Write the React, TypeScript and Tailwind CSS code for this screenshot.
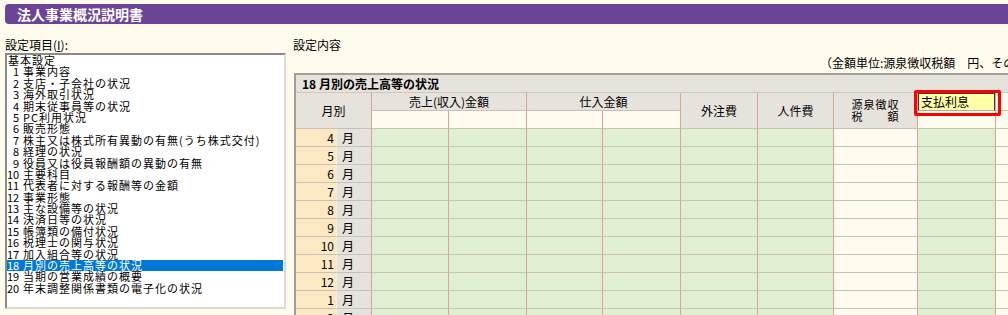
const items = [
  { no: "", label: "基本設定" },
  { no: "1", label: "事業内容" },
  { no: "2", label: "支店・子会社の状況" },
  { no: "3", label: "海外取引状況" },
  { no: "4", label: "期末従事員等の状況" },
  { no: "5", label: "PC利用状況" },
  { no: "6", label: "販売形態" },
  { no: "7", label: "株主又は株式所有異動の有無(うち株式交付)" },
  { no: "8", label: "経理の状況" },
  { no: "9", label: "役員又は役員報酬額の異動の有無" },
  { no: "10", label: "主要科目" },
  { no: "11", label: "代表者に対する報酬等の金額" },
  { no: "12", label: "事業形態" },
  { no: "13", label: "主な設備等の状況" },
  { no: "14", label: "決済日等の状況" },
  { no: "15", label: "帳簿類の備付状況" },
  { no: "16", label: "税理士の関与状況" },
  { no: "17", label: "加入組合等の状況" },
  { no: "18", label: "月別の売上高等の状況" },
  { no: "19", label: "当期の営業成績の概要" },
  { no: "20", label: "年末調整関係書類の電子化の状況" },
];

const months = [4, 5, 6, 7, 8, 9, 10, 11, 12, 1, 2, 3];

// background of each data column
const cellBg = [
  "bg-[#fde8c4]",
  "bg-[#e6e2dc]",
  "bg-[#dfefd0]",
  "bg-[#dfefd0]",
  "bg-[#dfefd0]",
  "bg-[#dfefd0]",
  "bg-[#dfefd0]",
  "bg-[#dfefd0]",
  "bg-[#fffbee]",
  "bg-[#dfefd0]",
  "bg-[#fffbee]",
];

const SettingList = () => {
  return (
    <ul className="h-[256px] w-[281px] overflow-hidden border-2 border-t-[#8a8a8a] border-l-[#8a8a8a] border-r-[#dedad2] border-b-[#dedad2] bg-white pr-[1px] text-[11px]">
      {items.map((item) => {
        const selected = item.no === "18";
        return (
          <li
            key={item.label}
            className={`flex h-[11.4px] items-center whitespace-nowrap leading-[11.4px] ${
              selected ? "bg-[#0078d7] text-white" : "text-black"
            }`}
          >
            {item.no === "" ? (
              <span className="pl-[1px] tracking-[1px]">{item.label}</span>
            ) : (
              <>
                <span className="w-[12px] text-right">{item.no}</span>
                <span className="ml-[4px] tracking-[1px]">{item.label}</span>
              </>
            )}
          </li>
        );
      })}
    </ul>
  );
};

const MonthTable = () => {
  const head = "flex items-center justify-center bg-[#e6e2dc] border-r border-b border-r-[#daa394] border-b-[#c9c1b7]";
  const sub = "bg-[#fffbee] border-r border-b border-r-[#daa394] border-b-[#c9c1b7]";
  return (
    <div className="ml-[1px] border-t-2 border-l-2 border-[#a29e9a] bg-[#e6e2dc]">
      <div className="flex h-[18px] items-center border-b border-[#d0c8c0] pl-[6px] text-[12px] leading-[16px] font-bold">
        18 月別の売上高等の状況
      </div>
      <div className="relative grid auto-rows-[18px] grid-cols-[41px_35px_77px_78px_76px_78px_77px_76px_84px_78px_1fr] text-[12px] leading-[14px]">
        <div className={`col-span-2 row-span-2 ${head}`}>月別</div>
        <div className={`col-span-2 ${head}`}>売上(収入)金額</div>
        <div className={`col-span-2 ${head}`}>仕入金額</div>
        <div className={`row-span-2 ${head}`}>外注費</div>
        <div className={`row-span-2 ${head}`}>人件費</div>
        <div className={`row-span-2 flex-col text-[11px] leading-[11.5px] tracking-[1px] ${head}`}>
          <span>源泉徴収</span>
          <span>税　　額</span>
        </div>
        <div className="border-r border-r-[#daa394] bg-[#e6e2dc]">
          <div className="flex h-[18px] items-center border border-[#3c3c3c] border-b-[#b0aca6] border-b-dashed bg-[#ffffa8] pl-[2px]">
            支払利息
          </div>
        </div>
        <div className="border-b border-b-[#c9c1b7] bg-[#fffbee]" />
        <div className={sub} />
        <div className={sub} />
        <div className={sub} />
        <div className={sub} />
        <div className={sub} />
        <div className="border-b border-b-[#c9c1b7] bg-[#fffbee]" />

        {months.map((m) =>
          cellBg.map((bg, i) => (
            <div
              key={`${m}-${i}`}
              className={`border-b border-b-[#c9c1b7] ${bg} ${
                i === 0
                  ? "border-r border-r-[#f3ece2] pr-[2px] text-right leading-[17px]"
                  : i === 10
                  ? ""
                  : "border-r border-r-[#daa394]"
              } ${i === 1 ? "pl-[5px] leading-[17px]" : ""}`}
            >
              {i === 0 ? m : i === 1 ? "月" : ""}
            </div>
          ))
        )}

        <div className="absolute top-[-3px] left-[618px] h-[26px] w-[87px] rounded-[2px] border-[3px] border-[#ff0000]" />
      </div>
    </div>
  );
};

const App = () => {
  return (
    <div className="h-[315px] w-[1008px] overflow-hidden bg-[#fffbec] font-['Noto_Sans_CJK_JP',sans-serif] text-black">
      <div className="mt-[4px] ml-[5px] flex h-[20px] items-center rounded-l-[4px] bg-[#6c4496] pl-[12px] text-[14px] font-bold text-white">
        法人事業概況説明書
      </div>
      <div className="mt-[13px] flex">
        <div className="w-[286px] shrink-0 pl-[5px]">
          <p className="h-[16px] text-[12px] leading-[16px]">
            設定項目(<span className="underline">I</span>):
          </p>
          <SettingList />
        </div>
        <div className="min-w-0 flex-1 overflow-hidden pl-[7px]">
          <p className="h-[16px] text-[12px] leading-[16px]">設定内容</p>
          <p className="flex h-[20px] items-center whitespace-nowrap pl-[527px] text-[12px]">
            （金額単位:源泉徴収税額　円、その他
          </p>
          <MonthTable />
        </div>
      </div>
    </div>
  );
};

export default App;
